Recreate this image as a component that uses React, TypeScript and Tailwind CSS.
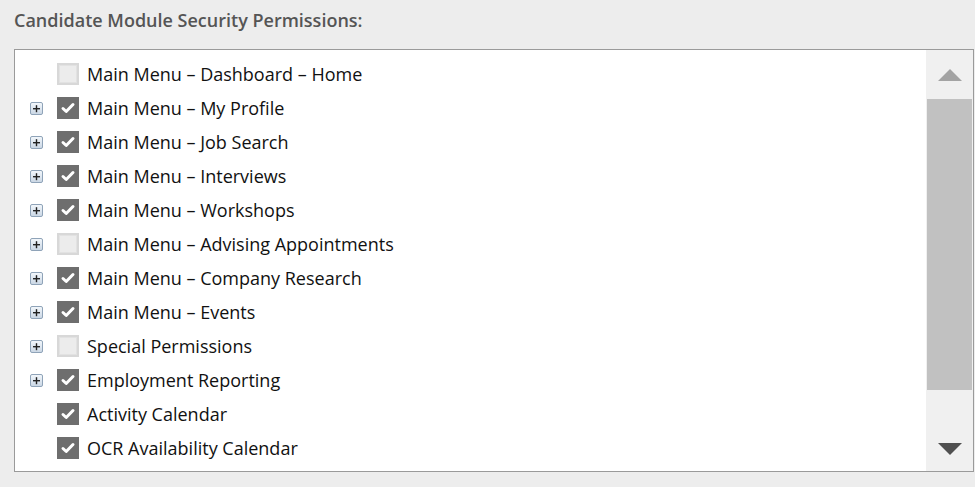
import React from "react";

type Row = { label: string; checked: boolean; expand: boolean };

const rows: Row[] = [
  { label: "Main Menu – Dashboard – Home", checked: false, expand: false },
  { label: "Main Menu – My Profile", checked: true, expand: true },
  { label: "Main Menu – Job Search", checked: true, expand: true },
  { label: "Main Menu – Interviews", checked: true, expand: true },
  { label: "Main Menu – Workshops", checked: true, expand: true },
  { label: "Main Menu – Advising Appointments", checked: false, expand: true },
  { label: "Main Menu – Company Research", checked: true, expand: true },
  { label: "Main Menu – Events", checked: true, expand: true },
  { label: "Special Permissions", checked: false, expand: true },
  { label: "Employment Reporting", checked: true, expand: true },
  { label: "Activity Calendar", checked: true, expand: false },
  { label: "OCR Availability Calendar", checked: true, expand: false },
];

function PlusIcon() {
  return (
    <svg width="13" height="13" viewBox="0 0 13 13">
      <defs>
        <linearGradient id="pg" x1="0" y1="0" x2="0" y2="1">
          <stop offset="0" stopColor="#f4f8fc" />
          <stop offset="1" stopColor="#c9d6e4" />
        </linearGradient>
      </defs>
      <rect x="0.5" y="0.5" width="12" height="12" rx="1.5" fill="url(#pg)" stroke="#8fa3b8" />
      <rect x="3" y="6" width="7" height="1.4" fill="#222" />
      <rect x="5.8" y="3.2" width="1.4" height="7" fill="#222" />
    </svg>
  );
}

function Check({ checked }: { checked: boolean }) {
  if (checked) {
    return (
      <div className="w-[22px] h-[22px] bg-[#6e6e6e] flex items-center justify-center">
        <svg width="16" height="14" viewBox="0 0 16 14">
          <path d="M3 7.5 L6.2 10.5 L13 3.5" fill="none" stroke="#ffffff" strokeWidth="3" strokeLinecap="round" strokeLinejoin="round" />
        </svg>
      </div>
    );
  }
  return (
    <div className="w-[22px] h-[22px] bg-[#d8d8d8] p-[2px]">
      <div className="w-full h-full bg-[#ececec] border border-[#e2e2e2]" />
    </div>
  );
}

export default function App() {
  return (
    <div
      className="w-[975px] h-[487px] bg-[#ededed] overflow-hidden"
      style={{ fontFamily: '"Open Sans", "Noto Sans", sans-serif' }}
    >
      <div className="pl-[14px] pt-[7px] h-[49px] text-[18px] text-[#555555] font-semibold">
        Candidate Module Security Permissions:
      </div>
      <div className="ml-[14px] w-[960px] h-[423px] border border-[#9a9a9a] bg-white flex">
        <div className="flex-1 pt-[7px]">
          {rows.map((r, i) => (
            <div key={i} className="h-[34px] flex items-center">
              <div className="w-[42px] pl-[15px] flex items-center">
                {r.expand ? <PlusIcon /> : null}
              </div>
              <Check checked={r.checked} />
              <span className="ml-[8px] text-[18px] text-[#111111] leading-none">{r.label}</span>
            </div>
          ))}
        </div>
        <div className="w-[47px] h-full bg-[#f0f0f0] flex flex-col items-center">
          <div className="h-[49px] w-full flex items-center justify-center">
            <svg width="26" height="14" viewBox="0 0 26 14">
              <path d="M13 1 L25 13 L1 13 Z" fill="#a3a3a3" />
            </svg>
          </div>
          <div className="w-[45px] h-[291px] bg-[#c1c1c1]" />
          <div className="flex-1 w-full flex items-end justify-center pb-[15px]">
            <svg width="26" height="14" viewBox="0 0 26 14">
              <path d="M1 1 L25 1 L13 13 Z" fill="#505050" />
            </svg>
          </div>
        </div>
      </div>
    </div>
  );
}
